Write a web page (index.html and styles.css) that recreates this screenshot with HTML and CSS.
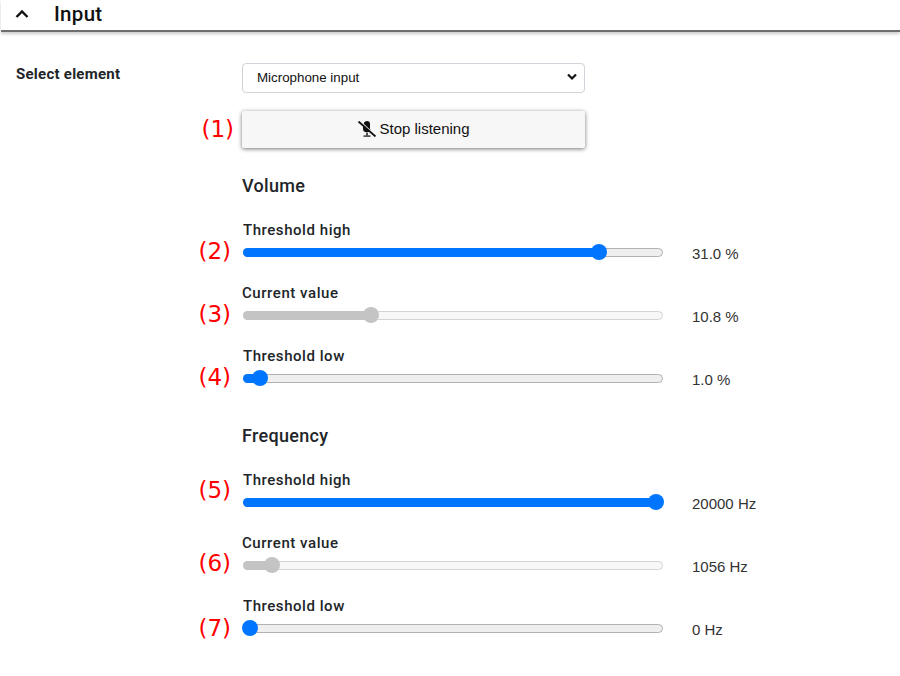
FILE: index.html
```html
<!DOCTYPE html>
<html lang="en">
<head>
<meta charset="utf-8">
<title>Input</title>
<link rel="stylesheet" href="styles.css">
</head>
<body>
<header class="bar">
  <svg class="chev" width="14" height="10" viewBox="0 0 14 10"><path d="M1.5 8 L7 2.5 L12.5 8" fill="none" stroke="#111" stroke-width="2.4"/></svg>
  <h1 class="title">Input</h1>
</header>
<main class="layout">
  <div class="side-label">Select element</div>
  <div class="content">
    <div class="select"><span>Microphone input</span>
      <svg class="caret" width="12" height="8" viewBox="0 0 12 8"><path d="M2 1.5 L6 5.5 L10 1.5" fill="none" stroke="#111" stroke-width="2.2"/></svg>
    </div>
    <div class="annotated btn-wrap">
      <span class="note note-btn">(1)</span>
      <button class="btn" type="button">
        <svg width="20" height="16" viewBox="0 0 20 16"><path d="M7 1.5 Q8 0 10 0 Q13 0 13 3 V8 L14 9.5 L7 3 Z M6 4 L12.5 10.5 Q11 11.5 10 11.5 Q6 11 6 8 Z" fill="#111"/><path d="M9 12 H11 V14.3 H13.5 V16 H6.5 V14.3 H9 Z" fill="#555"/><path d="M1.5 0.5 L18.5 15.5" stroke="#111" stroke-width="1.8"/></svg>
        <span>Stop listening</span>
      </button>
    </div>

    <h2 class="group">Volume</h2>
    <div class="row"><label class="lab">Threshold high</label>
      <div class="annotated slider"><span class="note">(2)</span><div class="track"><div class="fill" style="width:85%"><i class="thumb"></i></div></div></div>
      <span class="val">31.0 %</span></div>
    <div class="row"><label class="lab cur">Current value</label>
      <div class="annotated slider"><span class="note">(3)</span><div class="track off"><div class="fill" style="width:30.5%"><i class="thumb"></i></div></div></div>
      <span class="val">10.8 %</span></div>
    <div class="row"><label class="lab">Threshold low</label>
      <div class="annotated slider"><span class="note">(4)</span><div class="track"><div class="fill" style="width:3.8%"><i class="thumb"></i></div></div></div>
      <span class="val">1.0 %</span></div>

    <h2 class="group second">Frequency</h2>
    <div class="row"><label class="lab">Threshold high</label>
      <div class="annotated slider"><span class="note note-high">(5)</span><div class="track"><div class="fill" style="width:98.6%"><i class="thumb"></i></div></div></div>
      <span class="val">20000 Hz</span></div>
    <div class="row"><label class="lab cur">Current value</label>
      <div class="annotated slider"><span class="note note-mid">(6)</span><div class="track off"><div class="fill" style="width:6.8%"><i class="thumb"></i></div></div></div>
      <span class="val">1056 Hz</span></div>
    <div class="row"><label class="lab">Threshold low</label>
      <div class="annotated slider"><span class="note note-low">(7)</span><div class="track"><div class="fill" style="width:1.5%"><i class="thumb"></i></div></div></div>
      <span class="val">0 Hz</span></div>
  </div>
</main>
</body>
</html>
```
FILE: styles.css
```css
* { box-sizing: border-box; }
html, body { margin: 0; padding: 0; }
body {
  width: 900px;
  height: 676px;
  overflow: hidden;
  background: #fff;
  color: #212529;
  font-family: "Liberation Sans", Arial, sans-serif;
}
.bar {
  height: 32px;
  display: flex;
  align-items: center;
  gap: 25px;
  padding: 0 0 3px 14px;
  border-bottom: 2px solid #6e6e6e;
  box-shadow: 0 2px 3px rgba(0,0,0,.2);
  margin-left: 1px;
}
.title {
  margin: 0;
  font: 500 20.5px/24px Roboto, sans-serif;
  letter-spacing: .3px;
  color: #111;
}
.layout {
  display: grid;
  grid-template-columns: 242px 1fr;
  padding-top: 31px;
}
.side-label {
  padding: 2px 0 0 16px;
  font: 700 15px/18px Roboto, sans-serif;
  letter-spacing: .25px;
}
.select {
  width: 343px;
  height: 30px;
  display: flex;
  align-items: center;
  justify-content: space-between;
  padding: 0 6px 2px 14px;
  border: 1px solid #ced4da;
  border-radius: 4px;
  font-size: 13.33px;
  color: #111;
}
.annotated { position: relative; }
.note {
  position: absolute;
  right: calc(100% + 11px);
  top: 50%;
  transform: translateY(-50%);
  margin-top: -1px;
  font: 400 23px/28px "DejaVu Sans", sans-serif;
  color: #f00;
  white-space: nowrap;
}
.note-high { margin-top: -12px; }
.note-mid { margin-top: -2px; }
.note-low { margin-top: 0; }
.btn-wrap { margin-top: 18px; width: 343px; }
.note-btn { right: calc(100% + 8px); }
.btn {
  width: 343px;
  height: 37px;
  display: flex;
  align-items: center;
  justify-content: center;
  gap: 2px;
  padding: 0 0 2px;
  border: 0;
  border-radius: 2px;
  background: #f7f7f7;
  box-shadow: 0 1px 4px rgba(0,0,0,.55);
  font: 15px "Liberation Sans", Arial, sans-serif;
  color: #111;
}
.group {
  margin: 28px 0 0;
  font: 500 18px/20px Roboto, sans-serif;
  letter-spacing: .3px;
}
.group.second { margin-top: 34px; }
.row {
  display: grid;
  grid-template-columns: 421px auto;
  grid-template-rows: 18px 27px;
  column-gap: 28px;
  margin-top: 18px;
}
.group + .row { margin-top: 25px; }
.lab {
  grid-column: 1 / 3;
  padding-left: 1px;
  font: 500 15px/18px Roboto, sans-serif;
  letter-spacing: .55px;
}
.lab.cur { padding-left: 0; }
.slider { display: flex; align-items: center; padding-left: 1px; height: 14px; margin-top: 6px; }
.track {
  position: relative;
  width: 420px;
  height: 9px;
  border-radius: 5px;
  background: #efefef;
  border: 1px solid #b2b2b2;
}
.fill {
  position: absolute;
  left: -1px;
  top: -1px;
  height: 9px;
  border-radius: 5px 0 0 5px;
  background: #0075ff;
}
.thumb {
  position: absolute;
  right: -9px;
  top: -4px;
  width: 16px;
  height: 16px;
  border-radius: 50%;
  background: #0075ff;
}
.track.off { background: #f7f7f7; border-color: #d4d4d4; }
.track.off .fill, .track.off .thumb { background: #c4c4c4; }
.val {
  font-size: 15px;
  line-height: 18px;
  color: #333;
  margin-top: 6px;
  margin-left: 1px;
  white-space: nowrap;
}
```
